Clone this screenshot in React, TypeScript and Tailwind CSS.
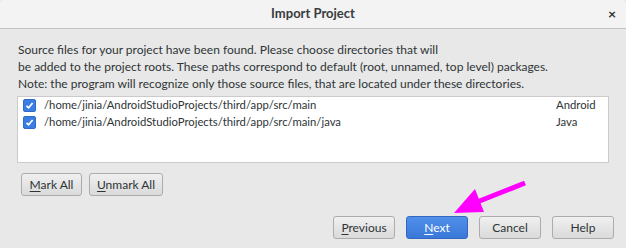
import React from "react";

const rows = [
  { path: "/home/jinia/AndroidStudioProjects/third/app/src/main", type: "Android" },
  { path: "/home/jinia/AndroidStudioProjects/third/app/src/main/java", type: "Java" },
];

function Check() {
  return (
    <span className="flex h-[13px] w-[13px] items-center justify-center rounded-[2px] bg-[#3b7de0] border border-[#2f6bc8]">
      <svg width="9" height="9" viewBox="0 0 9 9">
        <path d="M1.5 4.8 L3.6 6.8 L7.6 2" stroke="white" strokeWidth="1.7" fill="none" />
      </svg>
    </span>
  );
}

function Btn({ label, u, primary, w }: { label: string; u?: boolean; primary?: boolean; w: string }) {
  const cls = primary
    ? "bg-gradient-to-b from-[#5090ea] to-[#3a78d8] border-[#3268c0] text-white"
    : "bg-gradient-to-b from-[#f0f0f0] to-[#dadada] border-[#acacac] text-[#2e3436]";
  return (
    <button className={"h-[23px] shrink-0 whitespace-nowrap rounded-[3px] border text-[12px] leading-none " + w + " " + cls}>
      {u ? (
        <>
          <span className="underline underline-offset-2">{label[0]}</span>
          {label.slice(1)}
        </>
      ) : (
        label
      )}
    </button>
  );
}

export default function App() {
  return (
    <div className="relative flex h-[248px] w-[626px] flex-col bg-[#e8e8e8] font-['Lato',sans-serif] text-[#2e3436]">
      <div className="grid h-[29px] grid-cols-[1fr_auto_1fr] items-center border-b border-[#c2c2c2] bg-[#f3f3f3] rounded-t-[4px]">
        <span />
        <span className="text-[13px] font-bold text-[#383c3e]">Import Project</span>
        <span className="justify-self-end pr-[10px] text-[14px] font-bold leading-none text-[#2e3436]">×</span>
      </div>

      <div className="flex flex-1 flex-col px-[17px] pt-[12px]">
        <div className="pl-px text-[12px] leading-[17px]">
          <p>Source files for your project have been found. Please choose directories that will</p>
          <p>be added to the project roots. These paths correspond to default (root, unnamed, top level) packages.</p>
          <p>Note: the program will recognize only those source files, that are located under these directories.</p>
        </div>

        <div className="mt-[4px] h-[67px] w-[592px] border border-[#cbcbcb] bg-white">
          {rows.map((r) => (
            <div key={r.path} className="flex h-[17px] items-center pl-[5px] text-[11.3px]">
              <Check />
              <span className="ml-[8px] flex-1">{r.path}</span>
              <span className="w-[52px]">{r.type}</span>
            </div>
          ))}
        </div>

        <div className="mt-[10px] flex gap-[7px] pl-[4px]">
          <Btn label="Mark All" u w="w-[61px]" />
          <Btn label="Unmark All" u w="w-[74px]" />
        </div>

        <div className="mt-auto mb-[9px] mr-[-5px] flex justify-end gap-[11px]">
          <Btn label="Previous" u w="w-[62px]" />
          <Btn label="Next" u primary w="w-[62px]" />
          <Btn label="Cancel" w="w-[62px]" />
          <Btn label="Help" w="w-[62px]" />
        </div>
      </div>

      <svg className="absolute left-0 top-0" width="626" height="248" viewBox="0 0 626 248">
        <line x1="525" y1="183" x2="472" y2="204" stroke="#ff00ff" strokeWidth="5" />
        <polygon points="454,213 475,189 484,212" fill="#ff00ff" />
      </svg>
    </div>
  );
}
